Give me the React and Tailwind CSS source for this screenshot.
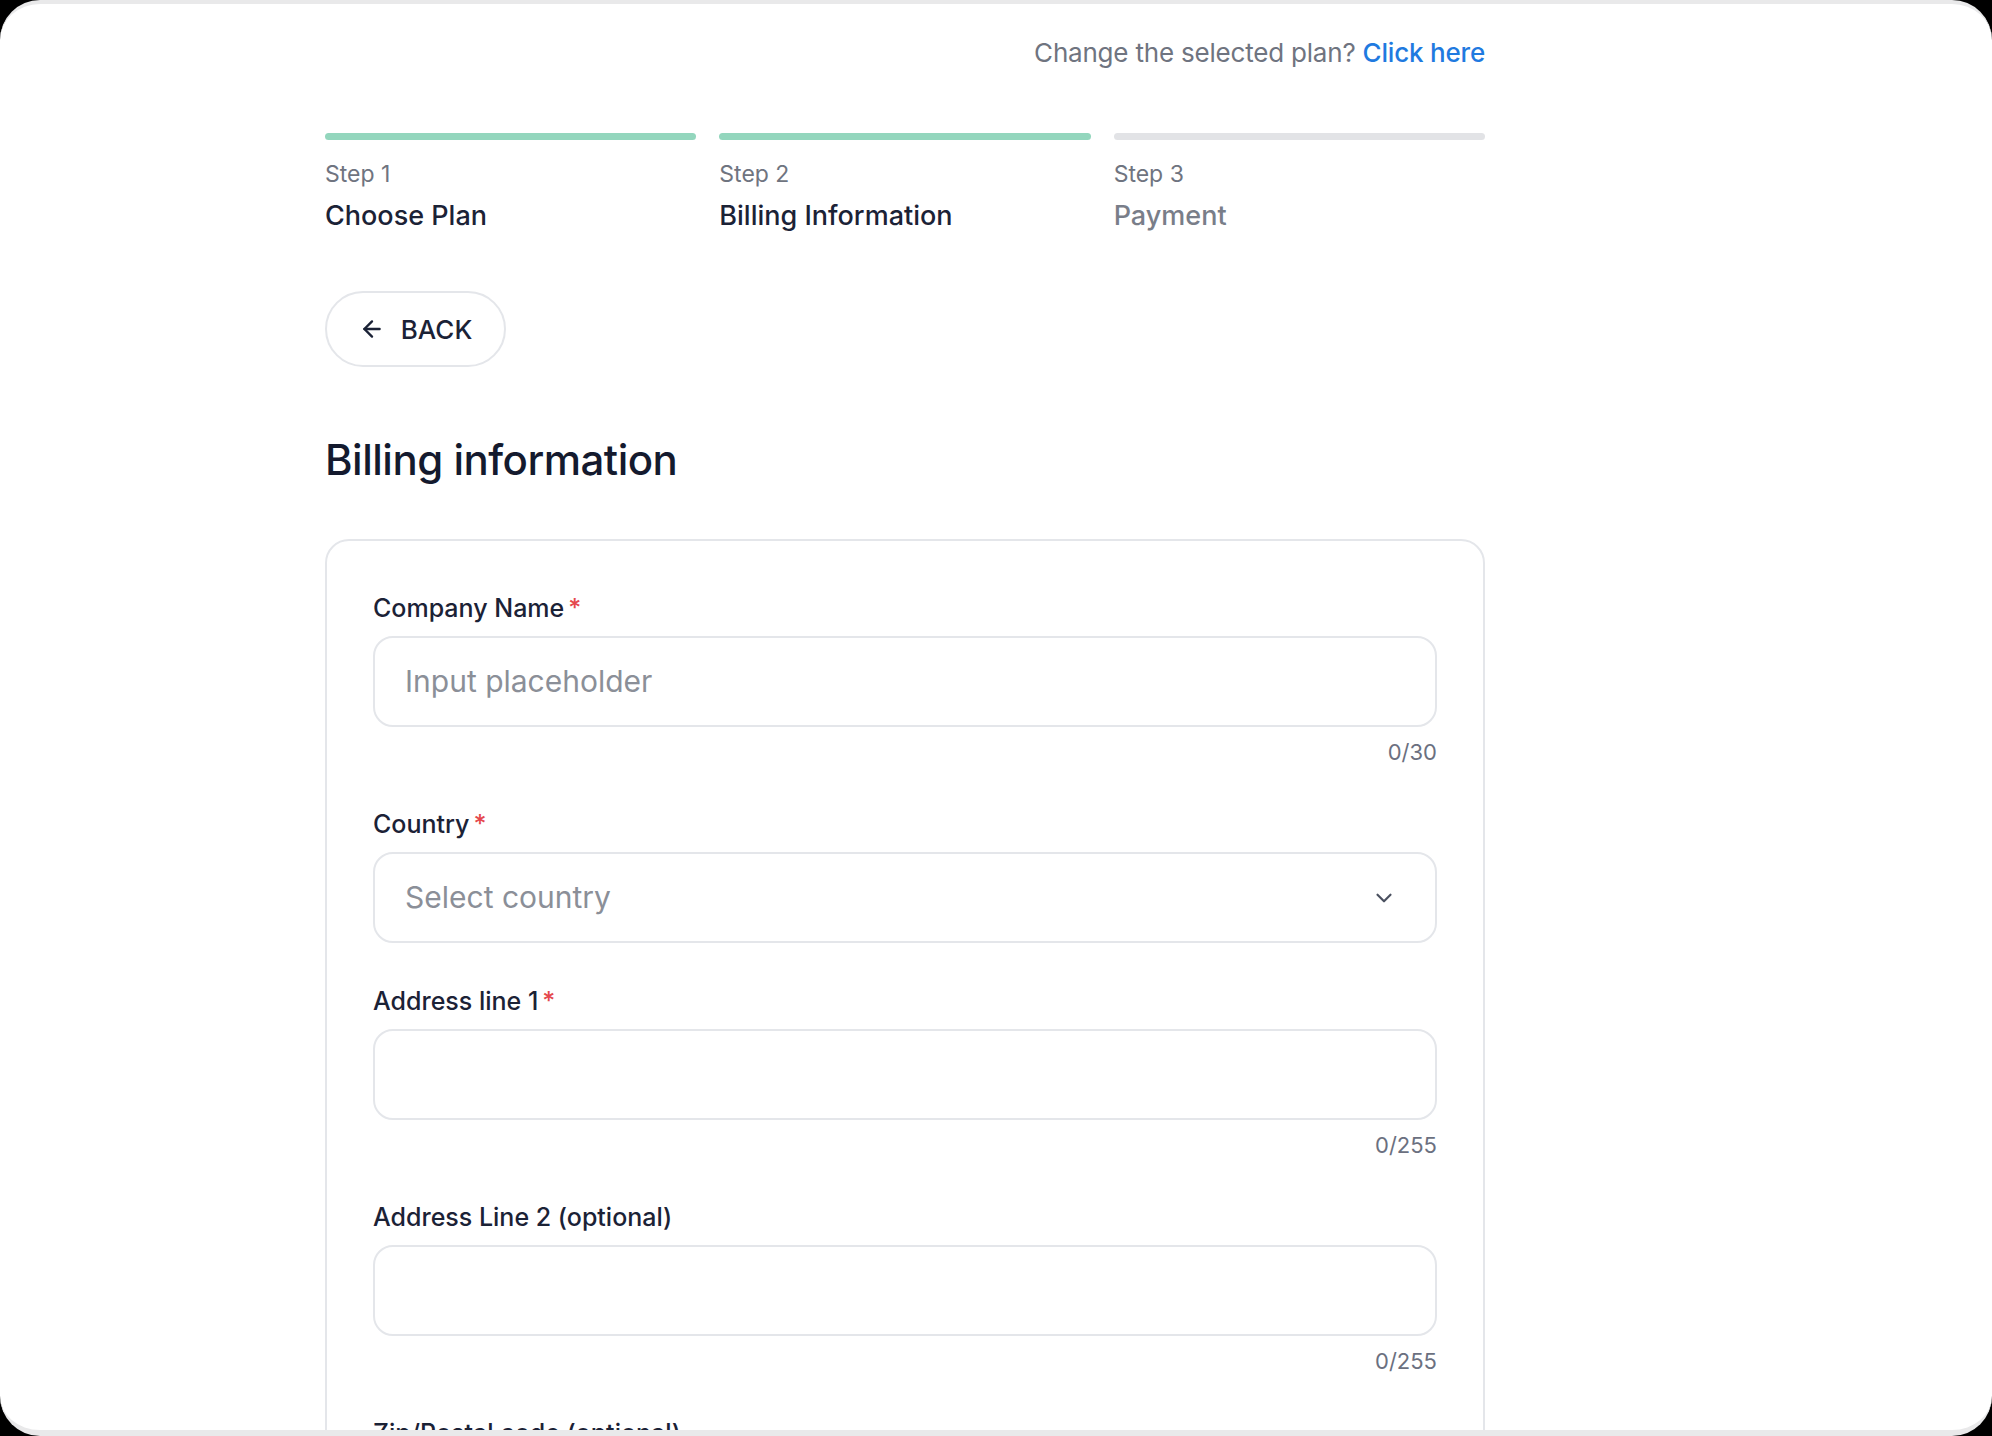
import { ArrowLeft, ChevronDown } from 'lucide-react';

const Field = ({ label, required, placeholder, counter, select }) => (
  <div className="flex flex-col">
    <label className="text-[25px] leading-[32px] font-medium text-[#1b2236] mb-[12px]">
      {label}
      {required && <span className="text-[#e5484d] ml-[4px]">*</span>}
    </label>
    <div className="h-[91px] border-2 border-[#e4e6ea] rounded-[20px] flex items-center px-[30px] justify-between">
      <span className="text-[30px] text-[#8b8f98]">{placeholder}</span>
      {select && <ChevronDown size={26} strokeWidth={2} className="text-[#4b5160] mr-[8px]" />}
    </div>
    {counter && (
      <div className="text-right text-[22px] leading-[28px] text-[#6b7080] mt-[11px]">{counter}</div>
    )}
  </div>
);

const Step = ({ n, title, done }) => (
  <div className="flex-1 flex flex-col">
    <div className={`h-[7px] rounded-full ${done ? 'bg-[#93d6bd]' : 'bg-[#e2e3e6]'}`} />
    <div className="mt-[19px] text-[23px] leading-[30px] text-[#6f7480]">Step {n}</div>
    <div className={`mt-[10px] text-[27px] leading-[34px] font-medium ${done ? 'text-[#1b2236]' : 'text-[#797e89]'}`}>{title}</div>
  </div>
);

export default function App() {
  return (
    <div className="w-[1992px] h-[1436px] bg-black" style={{ fontFamily: 'Inter, "Noto Sans", sans-serif' }}>
      <div className="w-full h-full bg-white rounded-[40px] border-t-[4px] border-b-[6px] border-[#e9e9ea] overflow-hidden">
        <div className="w-[1160px] ml-[325px] flex flex-col">
          <div className="text-right text-[26px] mt-[29px] text-[#6f7480] tracking-[-0.2px]">
            Change the selected plan? <span className="text-[#1f7ae0] font-medium">Click here</span>
          </div>
          <div className="flex gap-[23px] mt-[61px]">
            <Step n={1} title="Choose Plan" done />
            <Step n={2} title="Billing Information" done />
            <Step n={3} title="Payment" />
          </div>
          <button className="mt-[58px] w-[181px] h-[76px] rounded-full border-2 border-[#e4e6ea] flex items-center justify-center gap-[16px] text-[26px] text-[#1b2236] font-medium">
            <ArrowLeft size={26} strokeWidth={2.2} />
            BACK
          </button>
          <h1 className="mt-[68px] text-[42px] leading-[50px] font-medium text-[#141a2e] tracking-[-0.5px]">Billing information</h1>
          <div className="mt-[54px] border-2 border-[#e4e6ea] rounded-[24px] px-[46px] pt-[51px] pb-[40px] flex flex-col gap-[42px]">
            <Field label="Company Name" required placeholder="Input placeholder" counter="0/30" />
            <Field label="Country" required placeholder="Select country" select />
            <Field label="Address line 1" required counter="0/255" />
            <Field label="Address Line 2 (optional)" counter="0/255" />
            <Field label="Zip/Postal code (optional)" counter="0/10" />
          </div>
        </div>
      </div>
    </div>
  );
}
